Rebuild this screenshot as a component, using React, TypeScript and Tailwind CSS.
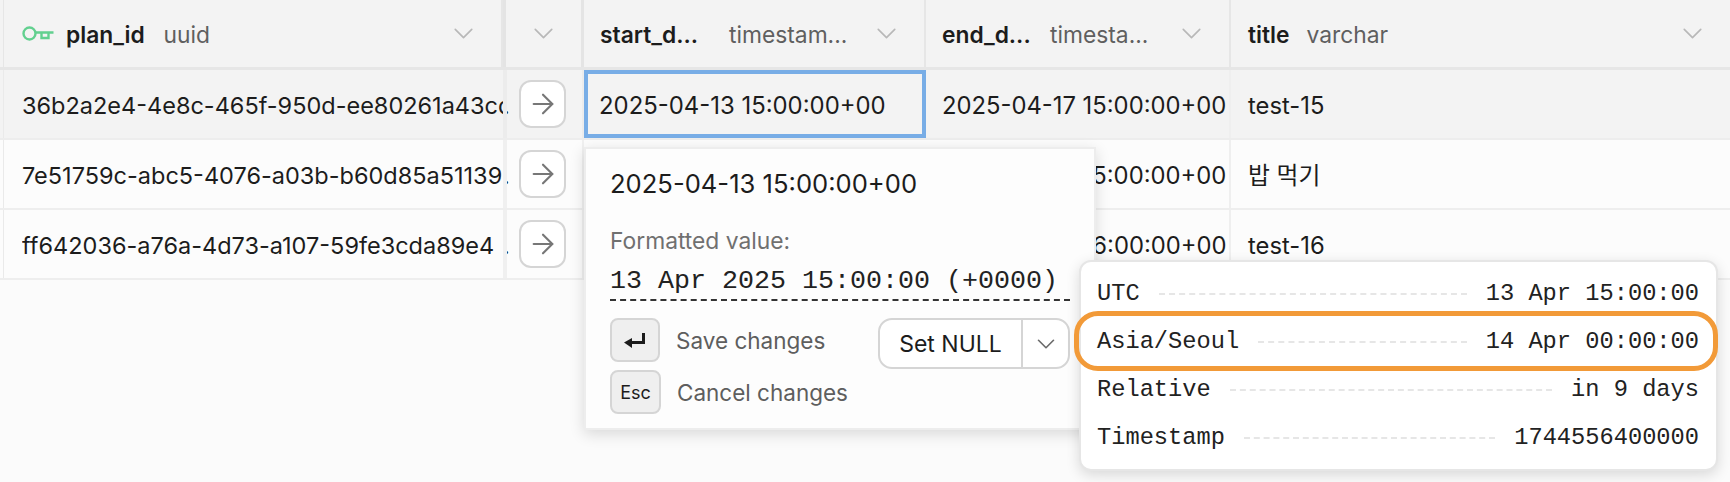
import { ArrowRight, ChevronDown } from "lucide-react";

const sans = "font-['Inter','Noto_Sans_CJK_KR',sans-serif]";

function KeyIcon() {
  return (
    <svg width="32" height="15" viewBox="0 0 32 15" fill="none" stroke="#62d08f" strokeWidth="2.400" className="shrink-0">
      <circle cx="7.500" cy="7.500" r="6" />
      <path d="M13.500 6.500H31.500M19.500 6.500v5.500h7V6.500" />
    </svg>
  );
}

function Chevron() {
  return <ChevronDown className="shrink-0 text-[#b8b8b8]" size={33} strokeWidth={1.200} />;
}

function HeadCell({ width, name, nameW, type, gap, border = true, pl = 16, children }: { width: number; name: string; nameW?: number; type: string; gap?: number; border?: boolean; pl?: number; children?: React.ReactNode }) {
  return (
    <div style={{ width, paddingLeft: pl }} className={`flex h-full shrink-0 items-center pr-[21px] ${border ? "border-r-2 border-[#e6e6e6]" : ""}`}>
      {children}
      <span style={{ width: nameW }} className="shrink-0 whitespace-nowrap pt-[3px] text-[22.800px] font-semibold text-[#1c1c1c]">{name}</span>
      <span style={{ marginLeft: gap }} className="whitespace-nowrap pt-[3px] text-[22.800px] text-[#5f5f5f]">{type}</span>
      <span className="flex-1" />
      <Chevron />
    </div>
  );
}

function Row({ id, end, title, active }: { id: string; end: string; title: string; active?: boolean }) {
  return (
    <div className={`flex h-[70px] border-b-2 ${active ? "border-[#ededed] bg-[#f3f3f3]" : "border-[#eeeeee] bg-[#fcfcfc]"}`}>
      <div className="w-[4px] shrink-0 border-r border-[#eaeaea]" />
      <div className="-mr-[6px] flex w-[505px] shrink-0 items-center overflow-hidden pl-[18px] pt-[3px] text-[23.500px] leading-none text-[#1c1c1c]">
        <span className="min-w-0 flex-1 overflow-hidden whitespace-nowrap">{id}</span>
        <span className="w-[6px] shrink-0">.</span>
      </div>
      <div className={`relative flex w-[81px] shrink-0 items-center border-l-[4px] border-r-2 pl-[12px] ${active ? "border-[#ececec]" : "border-[#f0f0f0]"}`}>
        <div className="flex h-[48px] w-[47px] items-center justify-center rounded-[12px] border-2 border-[#d5d5d5] bg-white">
          <ArrowRight size={32} strokeWidth={1.600} className="text-[#777777]" />
        </div>
      </div>
      <div className={`flex w-[342px] shrink-0 items-center pl-[11px] pt-[3px] ${active ? "border-[4px] border-[#78ade6]" : ""}`}>
        <span className="whitespace-nowrap text-[23.900px] leading-none text-[#1c1c1c]">{active ? "2025-04-13 15:00:00+00" : ""}</span>
      </div>
      <div className="flex w-[305px] shrink-0 items-center overflow-hidden border-r-2 border-[#efefef] pl-[16px] pt-[3px]">
        <span className="whitespace-nowrap text-[23.800px] leading-none text-[#1c1c1c]">{end}</span>
      </div>
      <div className="flex flex-1 items-center pl-[17px] pt-[3px]">
        <span className="whitespace-nowrap text-[23.800px] leading-none text-[#1c1c1c]">{title}</span>
      </div>
    </div>
  );
}

function TimeRow({ label, value }: { label: string; value: string }) {
  return (
    <div className="flex h-[48px] items-center gap-[19px] font-['Liberation_Mono',monospace] text-[23.700px] text-[#222222]">
      <span>{label}</span>
      <span className="flex-1 border-t-2 border-dashed border-[#e6e6e6]" />
      <span>{value}</span>
    </div>
  );
}

export default function App() {
  return (
    <div className={`relative h-[482px] w-[1730px] overflow-hidden bg-[#fbfbfb] ${sans}`}>
      <div className="flex h-[70px] border-b-[3px] border-[#e6e6e6] bg-[#f3f3f3]">
        <div className="w-[4px] shrink-0 border-r border-[#e6e6e6]" />
        <HeadCell width={499} name="plan_id" type="uuid" gap={19} pl={18}>
          <span className="mr-[12px] flex"><KeyIcon /></span>
        </HeadCell>
        <div className="flex h-full w-[81px] shrink-0 items-center justify-center border-x-[3px] border-[#e4e4e4]">
          <Chevron />
        </div>
        <HeadCell width={342} name="start_d..." nameW={101} type="timestam..." gap={28} />
        <HeadCell width={305} name="end_d..." nameW={92} type="timesta..." gap={16} />
        <HeadCell width={499} name="title" type="varchar" gap={17} border={false} pl={17} />
      </div>
      <Row active id="36b2a2e4-4e8c-465f-950d-ee80261a43cd" end="2025-04-17 15:00:00+00" title="test-15" />
      <Row id="7e51759c-abc5-4076-a03b-b60d85a51139" end="2025-04-17 15:00:00+00" title="밥 먹기" />
      <Row id="ff642036-a76a-4d73-a107-59fe3cda89e4" end="2025-04-17 16:00:00+00" title="test-16" />

      <div className="absolute left-[584px] top-[147px] h-[283px] w-[512px] border-2 border-[#ededed] bg-[#fdfdfd] px-[24px] pt-[18px] shadow-[0_4px_14px_rgba(0,0,0,0.14)]">
        <div className="text-[25.600px] leading-[34px] text-[#1c1c1c]">2025-04-13 15:00:00+00</div>
        <div className="mt-[26px] text-[22.800px] leading-[28px] text-[#707070]">Formatted value:</div>
        <div className="mt-[8px] w-[460px] border-b-2 border-dashed border-[#333333] font-['Liberation_Mono',monospace] text-[26.660px] leading-[36px] text-[#222222]">13 Apr 2025 15:00:00 (+0000)</div>
        <div className="mt-[17px] flex w-[460px] items-start justify-between">
          <div className="flex flex-col gap-[8px]">
            <div className="flex items-center gap-[16px]">
              <div className="flex h-[44px] w-[50px] items-center justify-center rounded-[8px] border-2 border-[#d5d5d5] bg-[#efefef]">
                <svg width="22" height="15" viewBox="0 0 22 15" fill="#1c1c1c">
                  <path d="M18 0h3v11H8v4L0 9.500 8 5v3h10z" />
                </svg>
              </div>
              <span className="pt-[1px] text-[22.500px] text-[#5e5e5e]">Save changes</span>
            </div>
            <div className="flex items-center gap-[16px]">
              <div className="flex h-[44px] w-[51px] items-center justify-center rounded-[8px] border-2 border-[#d5d5d5] bg-[#efefef] text-[18px] text-[#1c1c1c]">Esc</div>
              <span className="pt-[1px] text-[22.500px] text-[#5e5e5e]">Cancel changes</span>
            </div>
          </div>
          <div className="flex h-[51px] w-[192px] items-center rounded-[14px] border-2 border-[#d5d5d5] bg-white">
            <div className="flex h-full w-[143px] items-center justify-center border-r-2 border-[#d5d5d5] pt-[1px] text-[23px] text-[#1c1c1c]">Set NULL</div>
            <div className="flex flex-1 items-center justify-center">
              <ChevronDown size={30} strokeWidth={1.300} className="text-[#6a6a6a]" />
            </div>
          </div>
        </div>
      </div>

      <div className="absolute left-[1079px] top-[260px] h-[211px] w-[639px] rounded-[12px] border-2 border-[#e6e6e6] bg-white pb-[7px] pl-[16px] pr-[17px] pt-[8px] shadow-[0_4px_14px_rgba(0,0,0,0.14)]">
        <TimeRow label="UTC" value="13 Apr 15:00:00" />
        <TimeRow label="Asia/Seoul" value="14 Apr 00:00:00" />
        <TimeRow label="Relative" value="in 9 days" />
        <TimeRow label="Timestamp" value="1744556400000" />
        <div className="absolute -left-[7px] right-[-2px] top-[49px] h-[60px] rounded-[24px] border-[5px] border-[#f29a38]" />
      </div>
    </div>
  );
}
